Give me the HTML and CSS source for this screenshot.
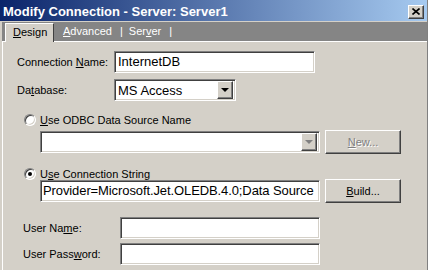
FILE: index.html
```html
<!DOCTYPE html>
<html lang="en">
<head>
	<meta charset="UTF-8">
	<title>Modify Connection</title>
	<link rel="stylesheet" href="styles.css">
</head>
<body>
	<div class="window">
		<div class="titlebar">
			<span class="title">Modify Connection - Server: Server1</span>
			<div class="close">
				<svg width="8" height="7" viewBox="0 0 8 7"><path d="M0.5 0.5 L7.5 6.5 M7.5 0.5 L0.5 6.5" stroke="#000" stroke-width="1.6"/></svg>
			</div>
		</div>
		<div class="frame">
			<div class="tabs">
				<div class="tab-lead"></div>
				<div class="tab active"><u>D</u>esign</div>
				<div class="tab-rest">
					<span class="tab"><u>A</u>dvanced</span>
					<span class="sep">|</span>
					<span class="tab">Ser<u>v</u>er</span>
					<span class="sep">|</span>
				</div>
			</div>
			<div class="page">
				<div class="row row-name">
					<label class="label">Connection <u>N</u>ame:</label>
					<div class="field sunken name-field">InternetDB</div>
				</div>
				<div class="row row-db">
					<label class="label">Da<u>t</u>abase:</label>
					<div class="combo sunken db-combo">
						<span class="combo-text">MS Access</span>
						<div class="drop raised"><span class="arrow"></span></div>
					</div>
				</div>
				<div class="radio-row radio-odbc">
					<span class="radio"></span>
					<span><u>U</u>se ODBC Data Source Name</span>
				</div>
				<div class="row row-odbc">
					<div class="combo sunken wide">
						<span class="combo-text"></span>
						<div class="drop raised"><span class="arrow disabled"></span></div>
					</div>
					<div class="btn raised disabled"><span><u>N</u>ew...</span></div>
				</div>
				<div class="radio-row radio-conn">
					<span class="radio checked"></span>
					<span>U<u>s</u>e Connection String</span>
				</div>
				<div class="row row-conn">
					<div class="field sunken wide conn-field">Provider=Microsoft.Jet.OLEDB.4.0;Data Source</div>
					<div class="btn raised"><span><u>B</u>uild...</span></div>
				</div>
				<div class="row row-user">
					<label class="label user-label">User Na<u>m</u>e:</label>
					<div class="field sunken user-field"></div>
				</div>
				<div class="row row-pass">
					<label class="label user-label">User Pass<u>w</u>ord:</label>
					<div class="field sunken user-field"></div>
				</div>
			</div>
		</div>
	</div>
</body>
</html>
```

FILE: styles.css
```css
body {
	margin: 0;
	background: #d4d0c8;
	font-family: "Liberation Sans", Arial, sans-serif;
	font-size: 11px;
	color: #000;
}
.window {
	width: 427px;
	height: 270px;
	border-right: 1px solid #808080;
	display: flex;
	flex-direction: column;
	overflow: hidden;
}
.titlebar {
	height: 21px;
	flex: none;
	display: flex;
	align-items: center;
	justify-content: space-between;
	padding: 0 3px 0 3px;
	background: linear-gradient(to right, #0a246a, #a6caf0);
	border-bottom: 1px solid #d4d0c8;
}
.title {
	color: #fff;
	font-weight: bold;
	font-size: 13px;
	padding-top: 1px;
}
.close {
	width: 16px;
	height: 14px;
	box-sizing: border-box;
	display: flex;
	align-items: center;
	justify-content: center;
	background: #d4d0c8;
	border: 1px solid;
	border-color: #fff #404040 #404040 #fff;
	box-shadow: inset -1px -1px 0 #808080;
	margin-top: 2px;
}
.frame {
	flex: 1;
	display: flex;
	flex-direction: column;
	padding-left: 2px;
}
/* tab strip */
.tabs {
	height: 20px;
	display: flex;
	align-items: flex-end;
	background: #858585;
}
.tab-lead {
	width: 3px;
	height: 1px;
	background: #fff;
}
.tab-rest {
	flex: 1;
	height: 20px;
	box-sizing: border-box;
	border-bottom: 1px solid #fff;
	display: flex;
	align-items: center;
	color: #fff;
	padding-left: 9px;
	padding-bottom: 1px;
}
.tab.active {
	width: 49px;
	height: 19px;
	box-sizing: border-box;
	background: #d4d0c8;
	border-top: 1px solid #fff;
	border-left: 1px solid #fff;
	border-right: 1px solid #404040;
	padding-left: 7px;
	line-height: 17px;
	color: #000;
}
.sep {
	margin: 0 6px 0 8px;
}
/* page */
.page {
	flex: 1;
	border-left: 1px solid #fff;
	display: flex;
	flex-direction: column;
	padding-left: 14px;
}
.row {
	display: flex;
	align-items: center;
}
.label {
	width: 97px;
}
.sunken {
	box-sizing: border-box;
	background: #fff;
	border: 1px solid;
	border-color: #808080 #fff #fff #808080;
	box-shadow: inset 1px 1px 0 #404040, inset -1px -1px 0 #d4d0c8;
}
.raised {
	box-sizing: border-box;
	background: #d4d0c8;
	border: 1px solid;
	border-color: #fff #404040 #404040 #fff;
	box-shadow: inset -1px -1px 0 #808080;
}
.field {
	height: 22px;
	font-size: 13px;
	line-height: 20px;
	padding-left: 3px;
	white-space: nowrap;
	overflow: hidden;
}
.conn-field {
	padding-left: 2px;
	letter-spacing: -0.1px;
}
.row-name {
	margin-top: 9px;
}
.name-field {
	width: 201px;
}
.row-db {
	margin-top: 6px;
}
.combo {
	height: 22px;
	display: flex;
	align-items: center;
	padding: 2px;
}
.combo-text {
	flex: 1;
	font-size: 13px;
	padding-left: 1px;
}
.db-combo {
	width: 122px;
}
.drop {
	width: 16px;
	height: 18px;
	display: flex;
	align-items: center;
	justify-content: center;
}
.arrow {
	width: 0;
	height: 0;
	border-left: 4px solid transparent;
	border-right: 4px solid transparent;
	border-top: 4px solid #000;
}
.arrow.disabled {
	border-top-color: #808080;
}
.radio-row {
	display: flex;
	align-items: center;
	gap: 4px;
	margin-left: 7px;
	height: 14px;
}
.radio-odbc {
	margin-top: 12px;
}
.radio-conn {
	margin-top: 13px;
}
.radio {
	width: 12px;
	height: 12px;
	box-sizing: border-box;
	border-radius: 50%;
	background: #fff;
	border: 1px solid;
	border-color: #808080 #fff #fff #808080;
	box-shadow: inset 1px 1px 0 #404040, inset -1px -1px 0 #d4d0c8;
	display: flex;
	align-items: center;
	justify-content: center;
}
.radio.checked::after {
	content: "";
	width: 4px;
	height: 4px;
	border-radius: 50%;
	background: #000;
}
.row-odbc, .row-conn {
	margin-left: 23px;
	gap: 5px;
}
.row-odbc {
	margin-top: 3px;
}
.row-conn {
	margin-top: -2px;
}
.wide {
	width: 280px;
}
.btn {
	width: 76px;
	height: 24px;
	display: flex;
	align-items: center;
	justify-content: center;
}
.btn.disabled {
	color: #808080;
	text-shadow: 1px 1px 0 #fff;
}
.row-user {
	margin-top: 14px;
	margin-left: 6px;
}
.row-pass {
	margin-top: 4px;
	margin-left: 6px;
}
.user-label {
	width: 97px;
}
.user-field {
	width: 200px;
}
```
